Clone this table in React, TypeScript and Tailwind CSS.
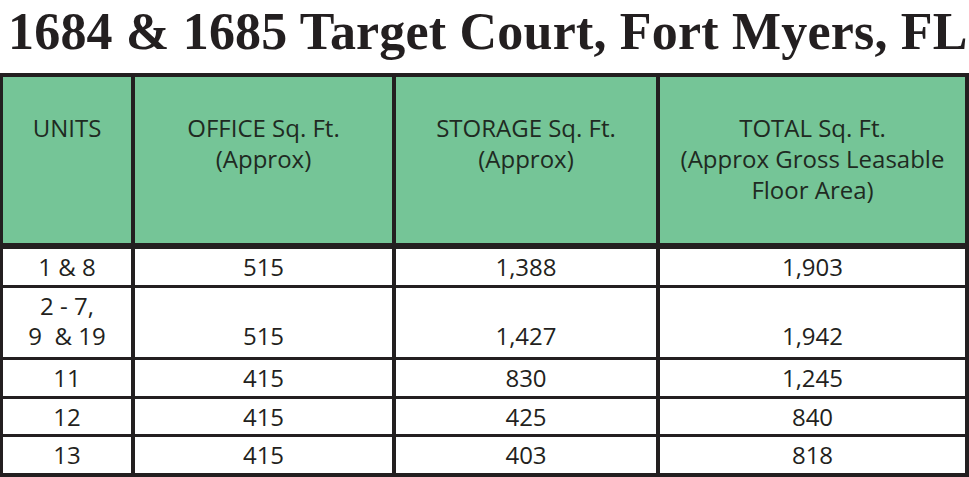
import React from 'react';

const headers = [
  ['UNITS'],
  ['OFFICE Sq. Ft.', '(Approx)'],
  ['STORAGE Sq. Ft.', '(Approx)'],
  ['TOTAL Sq. Ft.', '(Approx Gross Leasable', 'Floor Area)'],
];

const rows = [
  { units: ['1 & 8'], office: '515', storage: '1,388', total: '1,903' },
  { units: ['2 - 7,', '9\u00a0 & 19'], office: '515', storage: '1,427', total: '1,942' },
  { units: ['11'], office: '415', storage: '830', total: '1,245' },
  { units: ['12'], office: '415', storage: '425', total: '840' },
  { units: ['13'], office: '415', storage: '403', total: '818' },
];

const App: React.FC = () => {
  return (
    <div className="w-[969px] h-[477px] bg-white overflow-hidden text-[#231f20]">
      {/* Title */}
      <div className="h-[73px] pt-[6px] pl-[8px] whitespace-nowrap overflow-hidden font-['Liberation_Serif',serif] font-bold text-[52px] leading-[52px] tracking-[0.2px]">
        1684 &amp; 1685 Target Court, Fort Myers, FL
      </div>

      {/* Table */}
      <div className="grid grid-cols-[128px_257px_260px_305px] gap-x-[4px] gap-y-[3px] bg-[#231f20] pl-[3px] pr-[4px] py-[4px] font-['Open_Sans',sans-serif] text-[24px]">
        {headers.map((lines, i) => (
          <div key={i} className="h-[166px] mb-[3px] bg-[#75c597] pt-[35px] flex flex-col items-center text-center leading-[31px] text-[#1f2a22]">
            {lines.map((l, j) => (
              <span key={j} className="whitespace-nowrap">{l}</span>
            ))}
          </div>
        ))}

        {rows.map((r, i) => {
          const tall = r.units.length > 1;
          const cell = `bg-white flex flex-col items-center leading-[30px] ${tall ? 'h-[69px] justify-end pb-[6px]' : i === 3 ? 'h-[35px] justify-center' : 'h-[36px] justify-center'}`;
          return (
            <React.Fragment key={i}>
              <div className={cell}>
                {r.units.map((u, j) => (
                  <span key={j} className="whitespace-pre">{u}</span>
                ))}
              </div>
              <div className={cell}>{r.office}</div>
              <div className={cell}>{r.storage}</div>
              <div className={cell}>{r.total}</div>
            </React.Fragment>
          );
        })}
      </div>
    </div>
  );
};

export default App;
